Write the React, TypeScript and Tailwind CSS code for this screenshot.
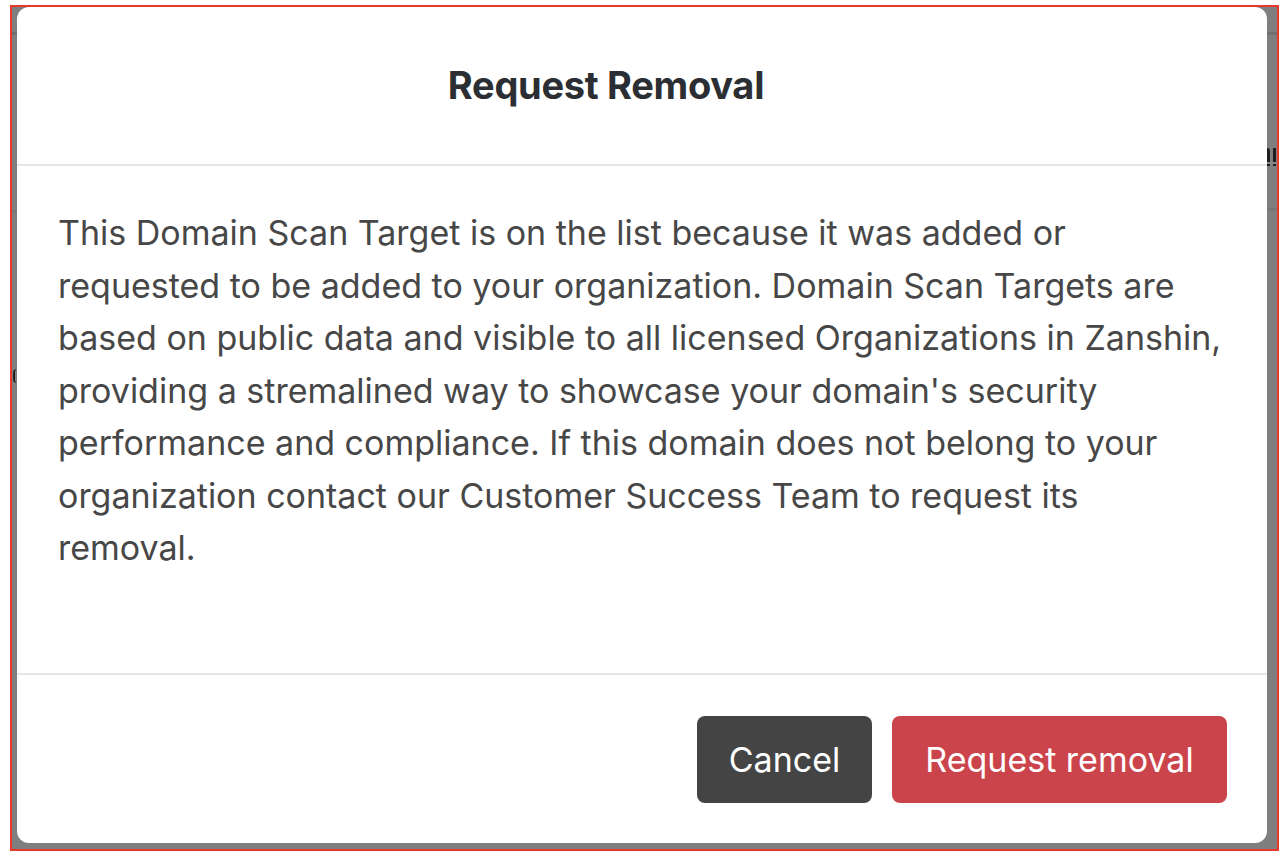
import React from "react";

export default function App() {
  return (
    <div className="w-[1280px] h-[854px] bg-white overflow-hidden pt-[5px] pl-[10px]">
      <div className="w-[1269px] h-[846px] border-2 border-[#e8392c] bg-[#7f7f7f] flex">
        <div className="w-[5px] shrink-0 flex flex-col overflow-hidden">
          <div className="h-[25px] shrink-0" />
          <div className="h-[3px] shrink-0 bg-[#707070]" />
          <div className="h-[175px] shrink-0" />
          <div className="h-[3px] shrink-0 bg-[#777777]" />
          <div className="h-[156px] shrink-0" />
          <div className="h-[14px] w-[4px] shrink-0 ml-[1px] border-l-2 border-[#222222] rounded-l-full" />
        </div>
        <div className="w-[1250px] h-[836px] shrink-0 bg-white rounded-[12px] flex flex-col" style={{ fontFamily: "Inter, 'Noto Sans', sans-serif" }}>
          <div className="h-[159px] shrink-0 border-b-2 border-[#e3e6ea] flex items-center justify-center pr-[72px]">
            <h2 className="text-[38px] font-bold text-[#2b2f33] tracking-[-0.3px]">Request Removal</h2>
          </div>
          <div className="pl-[41px] pr-[44px] pt-[41px] pb-[98px] text-[34px] leading-[52.5px] text-[#474747] border-b-2 border-[#e3e6ea]">
            This Domain Scan Target is on the list because it was added or requested to be added to your organization. Domain Scan Targets are based on public data and visible to all licensed Organizations in Zanshin, providing a stremalined way to showcase your domain's security performance and compliance. If this domain does not belong to your organization contact our Customer Success Team to request its removal.
          </div>
          <div className="flex-1 flex items-start justify-end gap-[20px] pt-[41px] pr-[40px]">
            <button className="h-[87px] w-[175px] rounded-[8px] bg-[#444444] text-white text-[34px]">Cancel</button>
            <button className="h-[87px] w-[335px] rounded-[8px] bg-[#cc444b] text-white text-[34px]">Request removal</button>
          </div>
        </div>
        <div className="w-[10px] shrink-0 flex flex-col overflow-hidden">
          <div className="h-[25px] shrink-0" />
          <div className="h-[3px] shrink-0 bg-[#707070]" />
          <div className="h-[111px] shrink-0" />
          <div className="h-[20px] shrink-0 flex items-end gap-[3px]">
            <div className="w-[3px] h-[18px] bg-[#1e1e1e] rounded-tr-[3px]" />
            <div className="w-[3px] h-[18px] bg-[#1e1e1e]" />
          </div>
          <div className="h-[2px] shrink-0 bg-[#888888] -mt-[4px]" />
          <div className="h-[44px] shrink-0" />
          <div className="h-[3px] shrink-0 bg-[#777777]" />
        </div>
      </div>
    </div>
  );
}
